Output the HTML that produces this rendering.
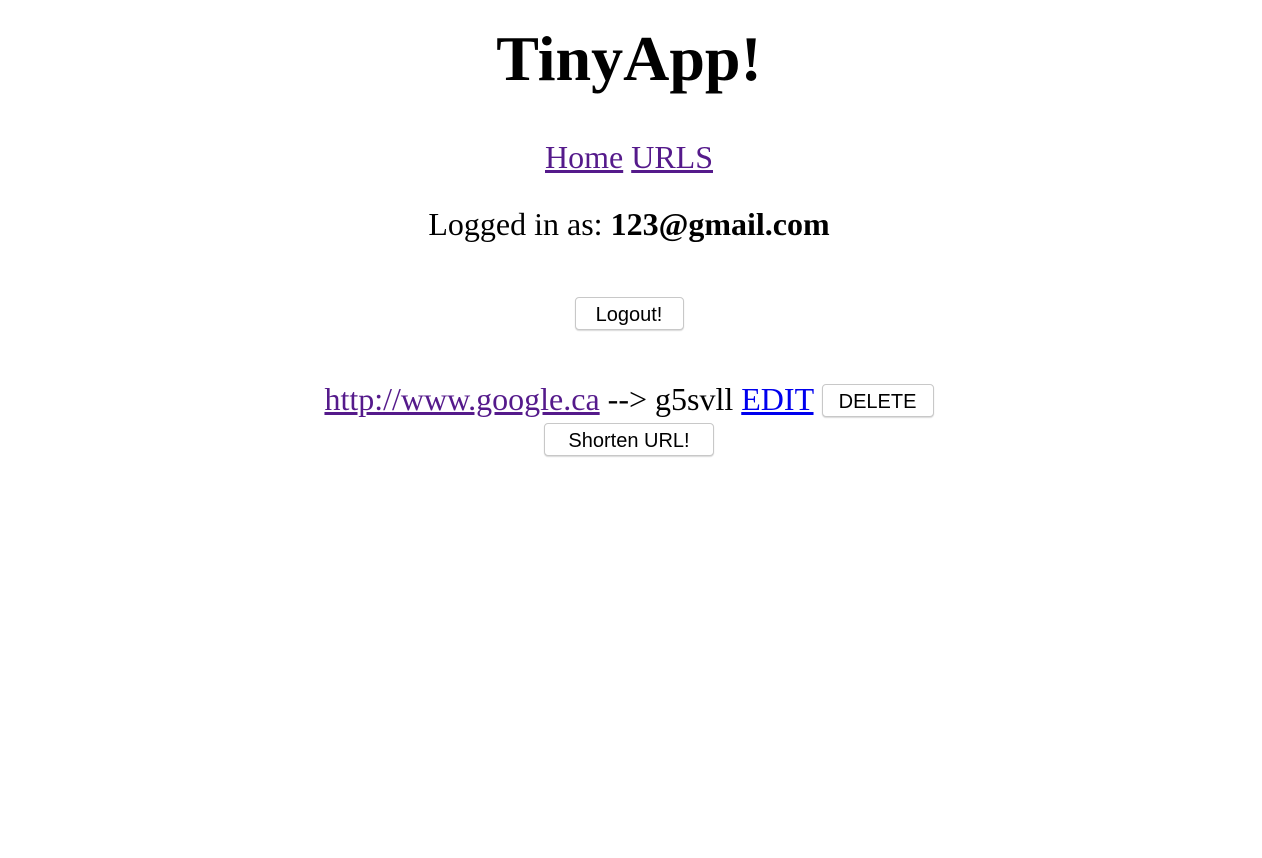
<!DOCTYPE html>
<html><head><style>
body{margin:0;width:1262px;height:858px;background:#fff;font-family:"Liberation Serif",serif;color:#000;position:relative;overflow:hidden}
.c{position:absolute;left:-2px;width:1262px;text-align:center;white-space:nowrap}
a{color:#551a8b;text-decoration:underline}
a.b{color:#0000ee}
button{font-family:"Liberation Sans",sans-serif;font-size:20px;background:#fff;border:1px solid #c8c8c8;border-radius:4px;box-shadow:0 1px 1px rgba(0,0,0,.15);color:#000;height:33px;padding:3px 14px 0;vertical-align:middle;margin:0}
</style></head><body>
<div class="c" style="top:19px;font-size:64px;font-weight:bold;line-height:80px">TinyApp!</div>
<div class="c" style="top:137px;font-size:32px;line-height:40px"><a href="#">Home</a> <a href="#">URLS</a></div>
<div class="c" style="top:204px;font-size:32px;line-height:40px">Logged in as: <b>123@gmail.com</b></div>
<div class="c" style="top:297px"><button style="width:109px">Logout!</button></div>
<div class="c" style="top:379px;font-size:32px;line-height:40px"><a href="#">http://www.google.ca</a> --&gt; g5svll <a class="b" href="#">EDIT</a> <button style="width:112px;position:relative;top:-2px">DELETE</button></div>
<div class="c" style="top:423px"><button style="width:170px">Shorten URL!</button></div>
</body></html>
